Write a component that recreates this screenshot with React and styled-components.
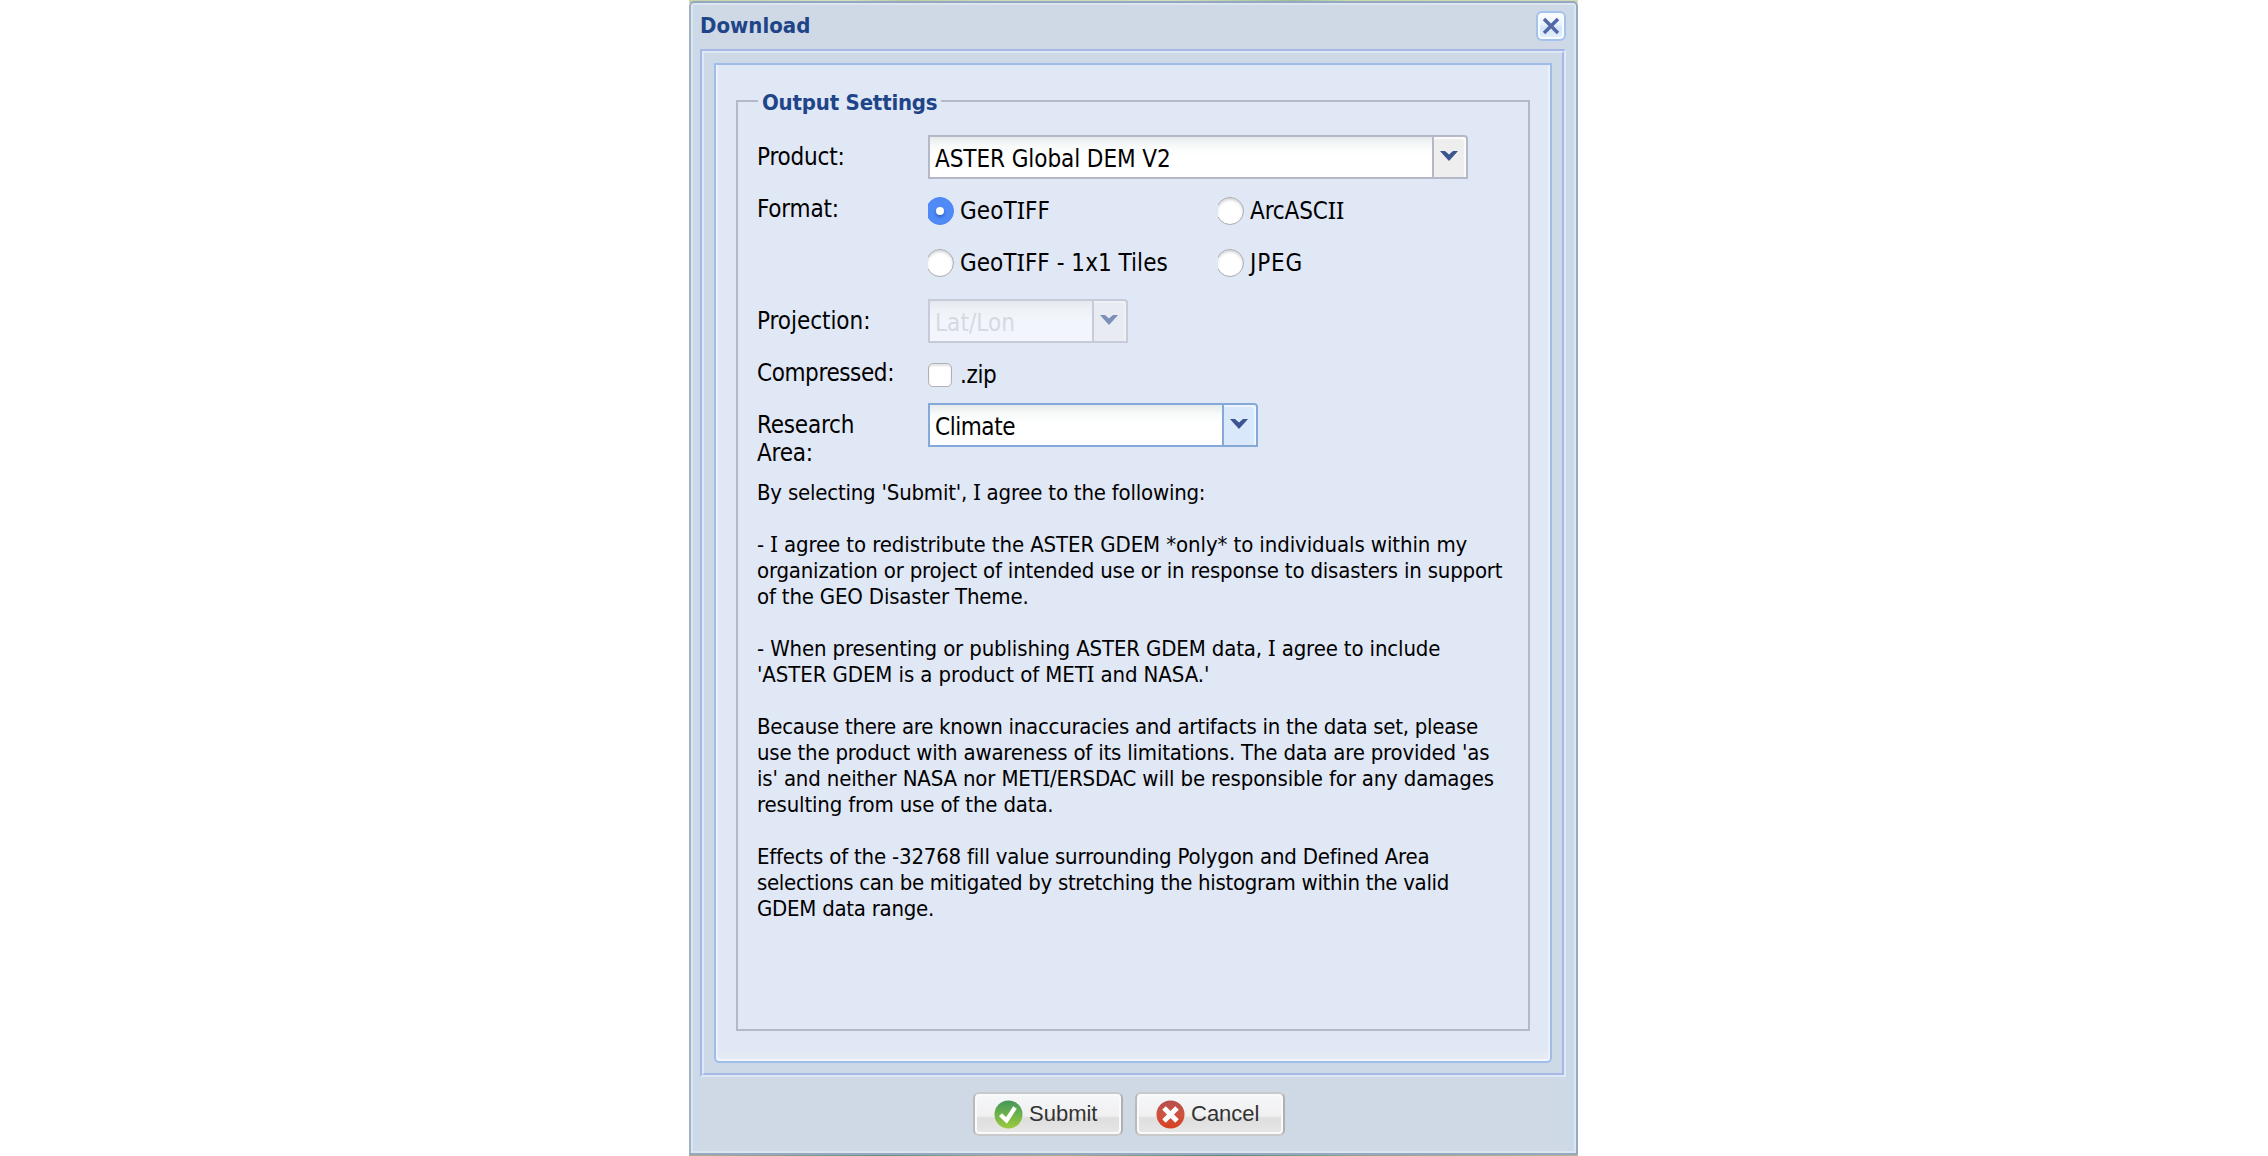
import React from "react";
import styled, { createGlobalStyle } from "styled-components";

const Global = createGlobalStyle`
  *, *::before, *::after { box-sizing: border-box; }
  body { margin: 0; background: #fff; font-family: "DejaVu Sans Condensed", Tahoma, "DejaVu Sans", sans-serif; color: #000; }
`;

const Page = styled.main`
  display: flex;
  justify-content: center;
  height: 1156px;
  overflow: hidden;
  background: #fff;
`;

const MapStrip = styled.div`
  width: 889px;
  height: 1156px;
  padding: 1px 0;
  margin-right: 1px;
  background:
    linear-gradient(90deg, #cbd3a9 0%, #d7dfbd 18%, #b9cda0 24%, #cfdcb4 35%, #d3ddb8 55%, #9fc295 68%, #c8dcae 74%, #d5dbb4 100%) top / 100% 3px no-repeat,
    linear-gradient(90deg, #b0ae8e 0%, #6a8d83 22%, #9aa98c 34%, #a9ae8b 42%, #5f8a78 60%, #94a587 75%, #b3b795 100%) bottom / 100% 4px no-repeat;
`;

const Window = styled.section`
  display: flex;
  flex-direction: column;
  height: 1154px;
  border: 2px solid #94a8c2;
  border-left-color: #a2b1c4;
  border-radius: 5px 5px 2px 2px;
  background: #cfd9e5;
  box-shadow: inset 0 0 0 2px #dde5ee, inset 10px 0 2px #ccd9e8, inset -10px 0 2px #ccd9e8;
`;

const TitleBar = styled.header`
  display: flex;
  justify-content: space-between;
  height: 46px;
  padding: 8px 10px 0 9px;
`;

const Title = styled.h1`
  margin: 0;
  padding-top: 1px;
  font-size: 22px;
  line-height: 28px;
  color: #204488;
`;

const CloseButton = styled.button`
  display: grid;
  place-items: center;
  width: 30px;
  height: 30px;
  padding: 0;
  border: 2px solid #a3c2ec;
  border-radius: 6px;
  background: linear-gradient(#fff, #e8f1fc 45%, #d5e5f8 55%, #e3effd);
  box-shadow: inset 0 0 0 2px #f8fbff;
`;

const OuterFrame = styled.div`
  margin: 0 10px 0 9px;
  height: 1028px;
  border: 2px solid #a5b8e6;
  border-right-color: #e0e8f6;
  border-bottom-color: #e0e8f6;
`;

const InnerFrame = styled.div`
  height: 1024px;
  padding: 10px;
  border: 2px solid #a5b8e6;
  border-top-color: #e0e8f6;
  border-left-color: #e0e8f6;
  background: #cdd9e7;
`;

const Panel = styled.div`
  height: 1000px;
  padding: 20px;
  border: 2px solid #a0bde9;
  border-radius: 0 0 5px 5px;
  background: linear-gradient(#e0e7f5 0, #e0e7f5 984px, #e5ebf5 990px);
  box-shadow: inset 2px 0 0 #edf2fa, inset -2px 0 0 #edf2fa, inset 0 -2px 0 #f3f7fc;
`;

const Fieldset = styled.fieldset`
  height: 946px;
  margin: 0;
  padding: 18px 20px 0 19px;
  border: 2px solid #b5b8c8;
`;

const Legend = styled.legend`
  margin-left: 1px;
  padding: 4px 4px 0 4px;
  font-size: 22px;
  font-weight: bold;
  line-height: 28px;
  letter-spacing: -0.2px;
  color: #204488;
`;

const Row = styled.div`
  display: flex;
  height: ${(p) => p.$height}px;
`;

const Label = styled.label`
  flex: none;
  width: 171px;
  padding: 8px 31px 0 0;
  font-size: 24px;
  line-height: 28px;
  letter-spacing: ${(p) => p.$track ?? -0.2}px;
`;

const Combo = styled.div`
  display: flex;
  width: ${(p) => p.$width}px;
  height: 44px;
  border: 2px solid ${(p) => (p.$active ? "#84a9d9" : "#b5b8c8")};
  border-radius: 0 4px 0 0;
  background: linear-gradient(#e6eaea 0, #f7f9f9 8px, #fff 18px);
  opacity: ${(p) => (p.$disabled ? 0.6 : 1)};
`;

const ComboValue = styled.span`
  flex: 1;
  padding: 2px 0 0 5px;
  font-size: 24px;
  line-height: 40px;
  letter-spacing: ${(p) => p.$track}px;
  color: ${(p) => (p.$muted ? "#cfd1d4" : "#000")};
`;

const Trigger = styled.span`
  display: flex;
  justify-content: center;
  width: 34px;
  padding: 13px 2px 0 0;
  border-left: 2px solid ${(p) => (p.$active ? "#84a9d9" : "#b5b8c8")};
  border-radius: 0 3px 0 0;
  background: ${(p) => (p.$active ? "#d9e8fb" : "#eeeeef")};
  box-shadow: inset -2px 2px 1px ${(p) => (p.$active ? "#eef6ff" : "#fafafa")};
`;

const Options = styled.div`
  display: grid;
  grid-template-columns: 290px 290px;
  grid-auto-rows: 52px;
`;

const Option = styled.label`
  display: flex;
  align-items: center;
  height: 48px;
  font-size: 24px;
  letter-spacing: ${(p) => p.$track}px;
`;

const RadioClip = styled.span`
  width: 26px;
  height: 28px;
  margin-right: 6px;
  overflow: hidden;
`;

const Radio = styled.span`
  display: grid;
  place-items: center;
  width: 28px;
  height: 28px;
  margin-left: -2px;
  border: 1px solid ${(p) => (p.$on ? "#4a86f4" : "#a9abb0")};
  border-radius: 50%;
  background: ${(p) => (p.$on ? "#4f8af6" : "#fff")};
  box-shadow: ${(p) => (p.$on ? "none" : "inset 0 2px 3px #d4d5d7")};

  &::after {
    content: "";
    width: 8px;
    height: 8px;
    border-radius: 50%;
    background: #fff;
    box-shadow: ${(p) => (p.$on ? "0 2px 3px #2f62c4" : "none")};
  }
`;

const Checkbox = styled.span`
  width: 24px;
  height: 24px;
  margin-right: 8px;
  border: 1px solid #b0b2b6;
  border-radius: 5px;
  background: #fff;
  box-shadow: inset 0 2px 2px #e2e3e5;
`;

const Agreement = styled.div`
  display: flex;
  flex-direction: column;
  gap: 26px;
`;

const Paragraph = styled.p`
  margin: 0;
  font-size: 22px;
  line-height: 26px;
`;

const Line = styled.span`
  display: block;
  white-space: nowrap;
  letter-spacing: ${(p) => p.$track}px;
`;

const BarredI = styled.span`
  font-family: "Noto Sans", sans-serif;
  font-size: 1.02em;
  line-height: 0;
`;

const Footer = styled.footer`
  display: flex;
  gap: 12px;
  padding: 15px 0 0 282px;
`;

const Button = styled.button`
  display: flex;
  align-items: center;
  width: 150px;
  height: 44px;
  padding: 0 0 0 19px;
  border: 2px solid #c9c9c9;
  border-left-color: #b9babc;
  border-right-color: #b0b0b0;
  border-radius: 6px;
  background: linear-gradient(#f6f7f9 0, #f0f0f1 22px, #dedede 24px, #e6e6e6 100%);
  box-shadow: inset 0 0 0 2px #fafafa;
  font: 22px/40px "Liberation Sans", Arial, sans-serif;
  color: #333;

  svg { margin-right: 6px; flex: none; }
`;

const withBars = (text) =>
  text.split(/(I)/).map((part, i) => (part === "I" ? <BarredI key={i}>I</BarredI> : part));

const Arrow = () => (
  <svg width="20" height="12" viewBox="0 0 20 12">
    <path d="M1 1h5l4 3.6L14 1h5l-4.200 4.700L10 11 5.200 5.700z" fill="#3b5590" />
  </svg>
);

const Select = ({ width, value, track = 0, active, disabled }) => (
  <Combo $width={width} $active={active} $disabled={disabled}>
    <ComboValue $track={track} $muted={disabled}>{value}</ComboValue>
    <Trigger $active={active}><Arrow /></Trigger>
  </Combo>
);

const RadioOption = ({ label, on, track }) => (
  <Option $track={track}>
    <RadioClip><Radio $on={on} /></RadioClip>
    <span>{withBars(label)}</span>
  </Option>
);

const SubmitIcon = () => (
  <svg width="29" height="29" viewBox="0 0 29 29">
    <defs>
      <linearGradient id="ok" x1="0" y1="0" x2="0" y2="1">
        <stop offset="0" stopColor="#43975a" />
        <stop offset="0.5" stopColor="#6fb24c" />
        <stop offset="1" stopColor="#9ccb3c" />
      </linearGradient>
    </defs>
    <circle cx="14.500" cy="14.500" r="14" fill="url(#ok)" />
    <path d="M6.500 14.800l6 5.700L21 7.500" fill="none" stroke="#fff" strokeWidth="4.200" />
  </svg>
);

const CancelIcon = () => (
  <svg width="29" height="29" viewBox="0 0 29 29">
    <defs>
      <linearGradient id="no" x1="0" y1="0" x2="0" y2="1">
        <stop offset="0" stopColor="#b5504c" />
        <stop offset="0.5" stopColor="#cf5240" />
        <stop offset="1" stopColor="#d8401f" />
      </linearGradient>
    </defs>
    <circle cx="14.500" cy="14.500" r="14" fill="url(#no)" />
    <path d="M8 8l13 13M21 8l-13 13" stroke="#fff" strokeWidth="5" />
  </svg>
);

const terms = [
  [["By selecting 'Submit', I agree to the following:", -0.21]],
  [
    ["- I agree to redistribute the ASTER GDEM *only* to individuals within my", -0.1],
    ["organization or project of intended use or in response to disasters in support", -0.195],
    ["of the GEO Disaster Theme.", -0.18],
  ],
  [
    ["- When presenting or publishing ASTER GDEM data, I agree to include", -0.14],
    ["'ASTER GDEM is a product of METI and NASA.'", -0.09],
  ],
  [
    ["Because there are known inaccuracies and artifacts in the data set, please", -0.27],
    ["use the product with awareness of its limitations. The data are provided 'as", -0.2],
    ["is' and neither NASA nor METI/ERSDAC will be responsible for any damages", -0.16],
    ["resulting from use of the data.", -0.16],
  ],
  [
    ["Effects of the -32768 fill value surrounding Polygon and Defined Area", -0.195],
    ["selections can be mitigated by stretching the histogram within the valid", -0.31],
    ["GDEM data range.", -0.26],
  ],
];

export default function App() {
  return (
    <Page>
      <Global />
      <MapStrip>
        <Window>
          <TitleBar>
            <Title>Download</Title>
            <CloseButton aria-label="Close">
              <svg width="18" height="18" viewBox="0 0 18 18">
                <path d="M2 2l14 14M16 2L2 16" stroke="#5068a8" strokeWidth="3.400" />
              </svg>
            </CloseButton>
          </TitleBar>
          <OuterFrame>
            <InnerFrame>
              <Panel>
                <Fieldset>
                  <Legend>Output Settings</Legend>
                  <Row $height={52}>
                    <Label>Product:</Label>
                    <Select width={540} value="ASTER Global DEM V2" track={-0.08} />
                  </Row>
                  <Row $height={112}>
                    <Label>Format:</Label>
                    <Options>
                      <RadioOption label="GeoTIFF" on track={0.08} />
                      <RadioOption label="ArcASCII" track={-0.12} />
                      <RadioOption label="GeoTIFF - 1x1 Tiles" track={0.03} />
                      <RadioOption label="JPEG" track={0.8} />
                    </Options>
                  </Row>
                  <Row $height={52}>
                    <Label $track={-0.05}>Projection:</Label>
                    <Select width={200} value="Lat/Lon" track={0.07} disabled />
                  </Row>
                  <Row $height={52}>
                    <Label $track={-0.4}>Compressed:</Label>
                    <Option $track={-0.4}><Checkbox />.zip</Option>
                  </Row>
                  <Row $height={77}>
                    <Label>Research Area:</Label>
                    <Select width={330} value="Climate" track={-0.44} active />
                  </Row>
                  <Agreement>
                    {terms.map((lines, i) => (
                      <Paragraph key={i}>
                        {lines.map(([text, track]) => (
                          <Line key={text} $track={track}>{withBars(text)}</Line>
                        ))}
                      </Paragraph>
                    ))}
                  </Agreement>
                </Fieldset>
              </Panel>
            </InnerFrame>
          </OuterFrame>
          <Footer>
            <Button><SubmitIcon />Submit</Button>
            <Button><CancelIcon />Cancel</Button>
          </Footer>
        </Window>
      </MapStrip>
    </Page>
  );
}
